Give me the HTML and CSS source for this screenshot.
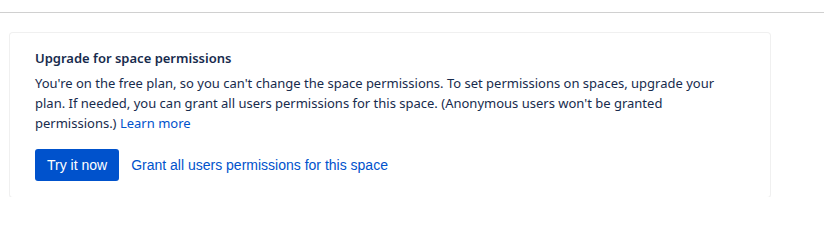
FILE: index.html
```html
<!DOCTYPE html>
<html>
<head>
<meta charset="utf-8">
<link rel="stylesheet" href="styles.css">
</head>
<body>
<div class="topbar"></div>
<div class="wrap">
  <section class="card">
    <h2 class="title">Upgrade for space permissions</h2>
    <p class="desc">You're on the free plan, so you can't change the space permissions. To set permissions on spaces, upgrade your plan. If needed, you can grant all users permissions for this space. (Anonymous users won't be granted permissions.) <a class="learn" href="#">Learn more</a></p>
    <div class="actions">
      <button class="btn">Try it now</button>
      <a class="grant" href="#">Grant all users permissions for this space</a>
    </div>
  </section>
</div>
</body>
</html>
```

FILE: styles.css
```css
html, body {
  margin: 0;
  padding: 0;
  background: #ffffff;
}
body {
  font-family: "Noto Sans", "Open Sans", sans-serif;
  color: #172b4d;
  font-size: 13px;
}
.topbar {
  height: 12px;
  border-bottom: 1px solid #d0d0d0;
}
.wrap {
  padding: 20px 54px 0 10px;
}
.card {
  width: 760px;
  box-sizing: border-box;
  padding: 15px 24px 16px 25px;
  border-radius: 3px;
  background: #fff;
  box-shadow: 0 0 0 1px #f0f0f0, 0 1px 1px rgba(9, 30, 66, 0.25);
}
.title {
  margin: 0;
  font-size: 13px;
  font-weight: 600;
  line-height: 20px;
}
.desc {
  margin: 5px 0 0;
  font-size: 13px;
  line-height: 20px;
}
.learn {
  color: #0052cc;
  text-decoration: none;
}
.actions {
  display: flex;
  align-items: center;
  gap: 12px;
  margin-top: 16px;
}
.btn {
  height: 32px;
  padding: 0 12px;
  border: none;
  border-radius: 3px;
  background: #0052cc;
  color: #fff;
  font-family: "Liberation Sans", Arial, sans-serif;
  font-size: 14px;
}
.grant {
  color: #0052cc;
  text-decoration: none;
  font-family: "Liberation Sans", Arial, sans-serif;
  font-size: 14px;
}
```
